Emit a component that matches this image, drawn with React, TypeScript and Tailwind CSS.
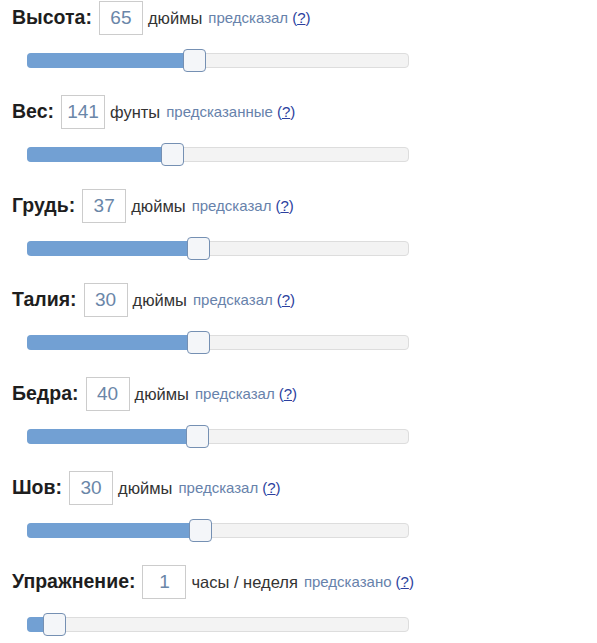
import React from 'react';

// One measurement row: label, value box, unit and a slider under it
interface Measure {
  label: string;
  value: string;
  unit: string;
  hint: string;
  pos: number; // handle centre, px from the track's left edge
}

const rows: Measure[] = [
  { label: 'Высота:', value: '65', unit: 'дюймы', hint: 'предсказал', pos: 167.5 },
  { label: 'Вес:', value: '141', unit: 'фунты', hint: 'предсказанные', pos: 145.5 },
  { label: 'Грудь:', value: '37', unit: 'дюймы', hint: 'предсказал', pos: 171 },
  { label: 'Талия:', value: '30', unit: 'дюймы', hint: 'предсказал', pos: 171 },
  { label: 'Бедра:', value: '40', unit: 'дюймы', hint: 'предсказал', pos: 170 },
  { label: 'Шов:', value: '30', unit: 'дюймы', hint: 'предсказал', pos: 173.5 },
  { label: 'Упражнение:', value: '1', unit: 'часы / неделя', hint: 'предсказано', pos: 27.5 },
];

const Slider: React.FC<{ pos: number }> = ({ pos }) => (
  <div className="relative ml-[27px] mt-[18px] h-[15px] w-[382px] rounded-[4px] border border-[#dddddd] bg-[#f3f3f3]">
    {/* filled part */}
    <div
      className="absolute left-[-1px] top-[-1px] h-[15px] rounded-l-[4px] bg-[#72a0d3]"
      style={{ width: pos }}
    />
    {/* handle */}
    <div
      className="absolute top-[-5px] h-[23px] w-[23px] rounded-[4px] border border-[#7590b3] bg-[#f4f6f9]"
      style={{ left: pos - 12.5 }}
    />
  </div>
);

const App: React.FC = () => {
  return (
    <div className="h-[643px] w-[597px] bg-white font-['Liberation_Sans',Arial,sans-serif]">
      {rows.map((row) => (
        <div key={row.label} className="h-[93px]">
          {/* Header line */}
          <div className="mt-[1px] flex h-[34px] items-center pl-3">
            <span className="text-[19.5px] font-bold text-[#1e1e1e]">{row.label}</span>
            <div className="ml-[7px] flex h-[34px] w-[44px] items-center justify-center border border-[#cccccc] text-[19px] text-[#6a86a8]">
              {row.value}
            </div>
            <span className="ml-[5px] text-[16.5px] text-[#333]">{row.unit}</span>
            <span className="ml-[6px] text-[15px] text-[#6782ab]">{row.hint}</span>
            <span className="ml-[4px] text-[15px] text-[#2b3f9e]">
              (<span className="underline">?</span>)
            </span>
          </div>

          {/* Slider */}
          <Slider pos={row.pos} />
        </div>
      ))}
    </div>
  );
};

export default App;
